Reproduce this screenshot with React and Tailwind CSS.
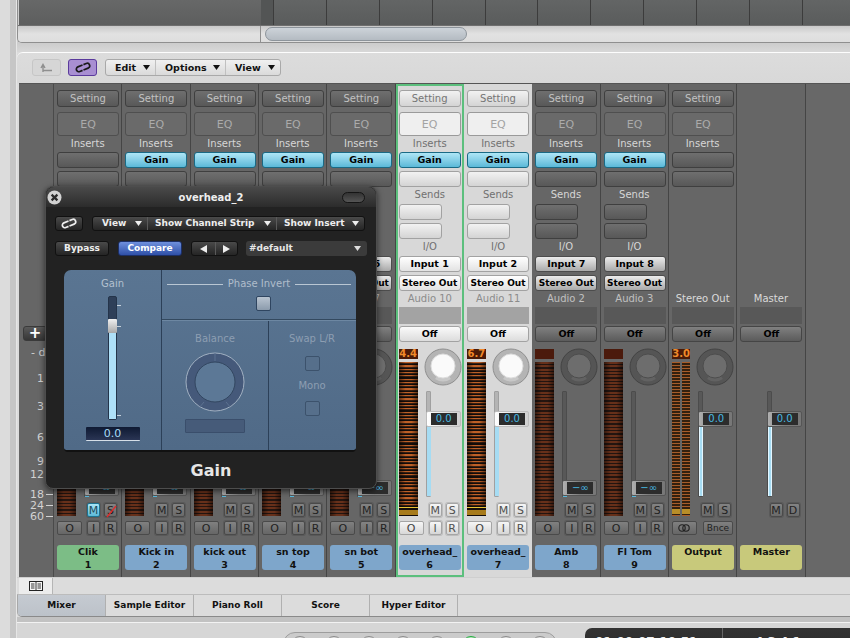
import React from "react";

const stripes = {
  dim: "bg-[linear-gradient(to_right,rgba(0,0,0,.5),transparent_35%,transparent_65%,rgba(0,0,0,.5)),repeating-linear-gradient(to_bottom,#67301a_0,#67301a_2px,#241510_2px,#241510_3.3px)]",
  hot: "bg-[linear-gradient(to_right,rgba(0,0,0,.5),transparent_35%,transparent_65%,rgba(0,0,0,.5)),repeating-linear-gradient(to_bottom,#bd6027_0,#bd6027_1.2px,#3a2012_1.2px,#3a2012_2.2px,#140d0a_2.2px,#140d0a_3.3px)]",
  out: "bg-[repeating-linear-gradient(to_bottom,#a85c2a_0,#a85c2a_1.4px,#33200f_1.4px,#33200f_3px)]",
};

function Chain({ c }) {
  return (
    <svg width="18" height="11" viewBox="0 0 18 11">
      <g transform="rotate(-22 9 5.5)" fill="none" stroke={c} strokeWidth="1.7">
        <path d="M7.5 8 H4.5 A2.5 2.5 0 0 1 4.5 3 H9.5" />
        <path d="M10.5 3 H13.5 A2.5 2.5 0 0 1 13.5 8 H8.5" />
      </g>
    </svg>
  );
}

function Knob({ l }) {
  const ring = l ? "#b4b4b4" : "#555";
  const edge = l ? "#8f8f8f" : "#434343";
  const disc = l ? "#fafafa" : "#6d6d6d";
  const discEdge = l ? "#dcdcdc" : "#4d4d4d";
  return (
    <svg width="38" height="38" viewBox="0 0 38 38" className="block">
      <circle cx="19" cy="19" r="18" fill={ring} stroke={edge} strokeWidth="1" />
      <path d="M11 31 A15 15 0 0 0 27 31 L24 27 A11 11 0 0 1 14 27 Z" fill={l ? "#c8c8c8" : "#626262"} />
      <circle cx="19" cy="18" r="12" fill={disc} stroke={discEdge} strokeWidth="1" />
    </svg>
  );
}

function Mini({ l, children, active, slash }) {
  return (
    <div
      className={
        "relative w-[13px] h-[14px] rounded-[2px] border flex items-center justify-center text-[11px] leading-none shadow-[0_0_0_1px_rgba(0,0,0,.12)] " +
        (active
          ? "bg-gradient-to-b from-[#a8e4f6] to-[#5cb9d8] border-[#1d7391] text-[#1e4a5c]"
          : l
          ? "bg-gradient-to-b from-[#f6f6f6] to-[#d6d6d6] border-[#a5a5a5] text-[#4f4f4f]"
          : "bg-gradient-to-b from-[#838383] to-[#6a6a6a] border-[#4a4a4a] text-[#222]")
      }
    >
      {children}
      {slash && (
        <svg width="13" height="14" viewBox="0 0 13 14" className="absolute left-0 top-0">
          <path d="M2 13 L11 2" stroke="#e02a2a" strokeWidth="1.4" />
        </svg>
      )}
    </div>
  );
}

function Box({ l, className = "", children, kind = "plain" }) {
  const k = {
    plain: l
      ? "bg-gradient-to-b from-[#f2f2f2] to-[#d4d4d4] border-[#a2a2a2] text-[#757575]"
      : "bg-gradient-to-b from-[#6f6f6f] to-[#585858] border-[#3f3f3f] text-[#c2c2c2]",
    eq: l ? "bg-[#efefef] border-[#9a9a9a] text-[#a3a3a3]" : "bg-[#6a6a6a] border-[#4f4f4f] text-[#ababab]",
    gain: "bg-gradient-to-b from-[#aee6f6] to-[#5ab9d8] border-[#1a6a85] text-black font-bold",
    io: l
      ? "bg-gradient-to-b from-[#ffffff] to-[#e2e2e2] border-[#a2a2a2] text-black font-bold"
      : "bg-gradient-to-b from-[#ececec] to-[#a9a9a9] border-[#4c4c4c] text-black font-bold",
    off: l
      ? "bg-gradient-to-b from-[#fafafa] to-[#dcdcdc] border-[#a2a2a2] text-black font-bold"
      : "bg-gradient-to-b from-[#808080] to-[#5b5b5b] border-[#454545] text-black font-bold",
  }[kind];
  return (
    <div className={"border rounded-[3px] flex items-center justify-center leading-none " + k + " " + className}>
      {children}
    </div>
  );
}

function Fader({ l, value, inf, thick }) {
  return (
    <div className="relative w-[35px] h-[106px]">
      <div
        className={
          "absolute left-0 top-0 w-[5px] h-full rounded-[1px] " +
          (l ? "bg-[#b4b4b4] border border-[#a0a0a0]" : "bg-[#585858] border border-[#4c4c4c]")
        }
      />
      {!inf && (
        <div
          className={
            "absolute left-[1px] top-[34px] bottom-[1px] w-[4px] bg-[#a6dcf3] " + (thick ? "border-x border-[#e4f6ff]" : "")
          }
        />
      )}
      {inf && <div className="absolute left-[1px] bottom-0 w-[4px] h-[2px] bg-[#59b9dc]" />}
      <div
        className={
          "absolute left-0 w-[35px] h-[16px] flex items-center rounded-[2px] border " +
          (inf ? "top-[89px] " : "top-[20px] ") +
          (l ? "bg-gradient-to-r from-[#ffffff] to-[#cfcfcf] border-[#bcbcbc]" : "bg-gradient-to-r from-[#b0b0b0] via-[#7d7d7d] to-[#777] border-[#555]")
        }
      >
        <div className="ml-[4px] w-[26px] h-[12px] bg-[#2c2c2c] flex items-center justify-center text-[10px] leading-none text-[#47b9e2]">
          {value}
        </div>
      </div>
    </div>
  );
}

function Strip({ n, sub, audio, input, gain, peak, color = "blue", selected, light, stereo, inf = true, master, active, section = "full" }) {
  const l = !!light;
  const labelCls = "text-[10px] leading-none text-center h-[11px] " + (l ? "text-[#707070]" : "text-[#d6d6d6]");
  const nameCls = {
    blue: "bg-[#7ea6cb]",
    green: "bg-[#7cbd86]",
    yellow: "bg-[#c8c97b]",
  }[color];
  return (
    <div
      className={
        "w-[68.33px] shrink-0 h-full px-[3px] flex flex-col " +
        (l ? "bg-[#d8d8d8] " : "bg-[#666666] border-r border-[#454545] ") +
        (selected ? "shadow-[inset_0_0_0_2px_#5cbf7d] z-[1] " : "")
      }
    >
      <div className="h-[207px] shrink-0 flex flex-col">
        {section !== "none" && (
          <>
            <Box l={l} className="mt-[6px] h-[17px] w-[62px] text-[10px]">Setting</Box>
            <Box l={l} kind="eq" className="mt-[5px] h-[24px] w-[62px] border-[1.5px] text-[11px]">EQ</Box>
            <div className={labelCls + " mt-[3px]"}>Inserts</div>
            <Box l={l} kind={gain ? "gain" : "plain"} className="mt-[2px] h-[16px] w-[62px] text-[9.5px]">{gain ? "Gain" : ""}</Box>
            <Box l={l} className="mt-[3px] h-[16px] w-[62px]" />
          </>
        )}
        {section === "full" && (
          <>
            <div className={labelCls + " mt-[3px]"}>Sends</div>
            <Box l={l} className="mt-[3px] h-[16px] w-[43px]" />
            <Box l={l} className="mt-[3px] h-[16px] w-[43px]" />
            <div className={labelCls + " mt-[3px]"}>I/O</div>
            <Box l={l} kind="io" className="mt-[3px] h-[16px] w-[62px] text-[9.5px]">{input}</Box>
            <Box l={l} kind="io" className="mt-[3px] h-[16px] w-[62px] text-[9px] whitespace-nowrap">Stereo Out</Box>
          </>
        )}
      </div>
      <div
        className={
          "mt-[3px] h-[11px] leading-none text-[10px] text-center " +
          (l ? "text-[#8b8b8b]" : stereo || master ? "text-[#dadada]" : "text-[#c0c0c0]")
        }
      >
        {audio}
      </div>
      <div className={"mt-[2px] h-[17px] w-[62px] " + (l ? "bg-[#a3a3a3]" : "bg-[#585858]")} />
      <Box l={l} kind="off" className="mt-[2px] h-[16px] w-[62px] text-[9.5px]">Off</Box>
      <div className="mt-[7px] flex h-[172px]">
        <div className="w-[19px] flex flex-col">
          {!master && (
            <>
              <div
                className={
                  "h-[10px] text-[10px] leading-none font-bold text-center " +
                  (peak ? "bg-[#4a1a08] text-[#f08a2a]" : "bg-[#4b1a0c]")
                }
              >
                {peak}
              </div>
              {stereo ? (
                <div className="mt-[3px] h-[154px] flex gap-[2px]">
                  <div className={"w-[8px] h-full flex flex-col justify-end " + stripes.out}>
                    <div className="h-[5px] mb-[2px] bg-[#b98e28]" />
                  </div>
                  <div className={"w-[8px] h-full flex flex-col justify-end " + stripes.out}>
                    <div className="h-[5px] mb-[2px] bg-[#b98e28]" />
                  </div>
                </div>
              ) : (
                <div className={"mt-[3px] h-[154px] w-[19px] flex flex-col justify-end " + (peak ? stripes.hot : stripes.dim)}>
                  {peak && (
                    <>
                      <div className="h-[1px] bg-[#e6c335]" />
                      <div className="h-[2px] bg-[#140d0a]" />
                      <div className="h-[5px] bg-[#a77b1c]" />
                      <div className="h-[1px] bg-[#140d0a]" />
                    </>
                  )}
                </div>
              )}
            </>
          )}
        </div>
        <div className="ml-[8px] w-[35px] flex flex-col">
          <div className="h-[38px] -ml-[2px] -mt-[1px]">{!master && <Knob l={l} />}</div>
          <div className="mt-[5px]">
            <Fader l={l} value={inf ? "−∞" : "0.0"} inf={inf} thick={stereo || master} />
          </div>
          <div className="mt-[6px] ml-[3px] flex gap-[4px]">
            <Mini l={l} active={active}>M</Mini>
            <Mini l={l} slash={active}>{master ? "D" : "S"}</Mini>
          </div>
        </div>
      </div>
      <div className="h-[14px] flex">
        {!master && (
          <>
            <div className={"w-[25px] h-[14px] rounded-[2px] border flex items-center justify-center text-[11px] leading-none " + (l ? "bg-gradient-to-b from-[#f6f6f6] to-[#d8d8d8] border-[#a5a5a5] text-[#444]" : "bg-gradient-to-b from-[#808080] to-[#666] border-[#4a4a4a] text-[#222]")}>
              {stereo ? (
                <svg width="14" height="8" viewBox="0 0 14 8">
                  <circle cx="5" cy="4" r="3.2" fill="none" stroke="#1f1f1f" strokeWidth="1.1" />
                  <circle cx="9" cy="4" r="3.2" fill="none" stroke="#1f1f1f" strokeWidth="1.1" />
                </svg>
              ) : (
                "O"
              )}
            </div>
            {stereo ? (
              <div className="ml-[6px] w-[30px] h-[14px] rounded-[2px] border bg-gradient-to-b from-[#808080] to-[#666] border-[#4a4a4a] text-[#222] flex items-center justify-center text-[9px] leading-none">
                Bnce
              </div>
            ) : (
              <div className="ml-[5px] flex gap-[4px]">
                <Mini l={l}>I</Mini>
                <Mini l={l}>R</Mini>
              </div>
            )}
          </>
        )}
      </div>
      <div className={"mt-[10px] h-[25px] w-[62px] rounded-[3px] text-[9.5px] leading-[13px] font-bold text-center text-[#111] " + nameCls}>
        <div className="whitespace-nowrap overflow-hidden">{n}</div>
        <div>{sub}</div>
      </div>
    </div>
  );
}

function Toolbar() {
  return (
    <div className="h-[31px] shrink-0 rounded-tl-[6px] border-t border-[#fdfdfd] bg-gradient-to-b from-[#dcdcdc] to-[#d8d8d8] flex items-start pt-[6px] pl-[15px]">
      <div className="w-[29px] h-[17px] rounded-[3px] border border-[#c6c6c6] bg-[#d6d6d6] flex items-center justify-center">
        <svg width="13" height="10" viewBox="0 0 13 10">
          <path d="M3 9 V3 M1 5 L3 1.5 L5 5 M3 7.5 H12" stroke="#8f8f8f" strokeWidth="1.4" fill="none" />
        </svg>
      </div>
      <div className="ml-[7px] w-[29px] h-[17px] rounded-[3px] border border-[#5a3a9c] bg-[#a88fd2] flex items-center justify-center">
        <Chain c="#1a1a1a" />
      </div>
      <div className="ml-[8px] w-[176px] h-[17px] rounded-[3px] border border-[#a9a9a9] bg-gradient-to-b from-[#f0f0f0] to-[#dadada] flex text-[9.5px] font-bold text-[#111] leading-none">
        <Menu w="w-[50px]" label="Edit" />
        <Menu w="w-[70px]" label="Options" />
        <Menu w="flex-1" label="View" none />
      </div>
    </div>
  );
}

function Menu({ w, label, none }) {
  return (
    <div className={w + " h-full flex items-center justify-between pl-[9px] pr-[5px] " + (none ? "" : "border-r border-[#c0c0c0]")}>
      <span>{label}</span>
      <Tri />
    </div>
  );
}

function Tri({ c = "#111" }) {
  return (
    <svg width="7" height="5" viewBox="0 0 7 5" className="shrink-0">
      <path d="M0 0 H7 L3.5 5 Z" fill={c} />
    </svg>
  );
}

function PBtn({ className = "", children }) {
  return (
    <div className={"h-[15px] rounded-[3px] border border-[#111] bg-gradient-to-b from-[#4a4a4a] to-[#252525] text-[#eeeeee] text-[9px] font-bold leading-none flex items-center " + className}>
      {children}
    </div>
  );
}

function Check({ bright, className = "" }) {
  return (
    <div
      className={
        "w-[15px] h-[15px] rounded-[2px] border " +
        (bright ? "bg-gradient-to-b from-[#b9c4d0] to-[#8b9bac] border-[#2f4560] " : "bg-[#566f8b] border-[#3c526c] ") +
        className
      }
    />
  );
}

function Plugin() {
  return (
    <div className="absolute left-[45px] top-[186px] w-[332px] h-[303px] rounded-[8px] bg-[#222222] border border-[#4d4d4d] flex flex-col z-10 shadow-[0_2px_6px_rgba(0,0,0,.6)]">
      <div className="relative h-[20px] shrink-0 rounded-t-[8px] bg-gradient-to-b from-[#4a4a4a] to-[#2c2c2c] flex items-center justify-center pt-[1px] text-[#eee] text-[10px] font-bold leading-none">
        overhead_2
        <svg width="15" height="15" viewBox="0 0 15 15" className="absolute left-[1px] top-[3px]">
          <circle cx="7.5" cy="7.5" r="7" fill="#d2d2d2" />
          <path d="M4.6 4.6 L10.4 10.4 M10.4 4.6 L4.6 10.4" stroke="#2b2b2b" strokeWidth="2.2" />
        </svg>
        <div className="absolute right-[11px] top-[5px] w-[23px] h-[11px] rounded-full border border-[#151515] bg-gradient-to-b from-[#333] to-[#555]" />
      </div>

      <div className="mt-[9px] flex ml-[9px]">
        <PBtn className="w-[28px] justify-center">
          <Chain c="#eee" />
        </PBtn>
        <PBtn className="ml-[9px] w-[273px]">
          <div className="w-[55px] h-full flex items-center justify-between pl-[9px] pr-[5px] border-r border-[#5a5a5a]">
            <span>View</span><Tri c="#eee" />
          </div>
          <div className="w-[129px] h-full flex items-center justify-between pl-[7px] pr-[5px] border-r border-[#5a5a5a] whitespace-nowrap">
            <span>Show Channel Strip</span><Tri c="#eee" />
          </div>
          <div className="flex-1 h-full flex items-center justify-between pl-[7px] pr-[5px] whitespace-nowrap">
            <span>Show Insert</span><Tri c="#eee" />
          </div>
        </PBtn>
      </div>

      <div className="mt-[10px] flex ml-[9px]">
        <PBtn className="w-[54px] justify-center">Bypass</PBtn>
        <div className="ml-[9px] w-[64px] h-[15px] rounded-[3px] border border-[#1c2f66] bg-gradient-to-b from-[#6f90dd] to-[#2f50a8] text-white text-[9px] font-bold leading-none flex items-center justify-center">
          Compare
        </div>
        <PBtn className="ml-[9px] w-[47px]">
          <div className="w-[24px] h-full flex items-center justify-center border-r border-[#5a5a5a]">
            <svg width="7" height="8" viewBox="0 0 7 8"><path d="M7 0 V8 L0 4 Z" fill="#eee" /></svg>
          </div>
          <div className="flex-1 h-full flex items-center justify-center">
            <svg width="7" height="8" viewBox="0 0 7 8"><path d="M0 0 V8 L7 4 Z" fill="#eee" /></svg>
          </div>
        </PBtn>
        <div className="ml-[8px] w-[121px] h-[15px] rounded-[3px] bg-[#3b3b3b] text-[#e6e6e6] text-[9px] font-bold leading-none flex items-center justify-between pl-[3px] pr-[6px]">
          <span>#default</span><Tri c="#ddd" />
        </div>
      </div>

      <div className="mt-[14px] ml-[18px] w-[292px] h-[182px] rounded-t-[7px] rounded-b-[4px] bg-gradient-to-b from-[#5a7592] to-[#506a87] border-b-2 border-[#111] flex text-[#a9b7c7] text-[10px] leading-none overflow-hidden">
        <div className="w-[98px] flex flex-col items-center pt-[9px] border-r border-[#2c4058]">
          <div className="h-[10px] text-[#b4c1cf]">Gain</div>
          <div className="relative mt-[7px] w-[9px] h-[124px] rounded-[2px] bg-[#2e3f58] border border-[#24344a]">
            <div className="absolute left-0 right-0 top-[36px] bottom-0 bg-[#aee0f8]" />
            <div className="absolute left-[-1px] w-[9px] top-[22px] h-[14px] rounded-[1px] bg-gradient-to-b from-[#f0f0f0] to-[#a9a9a9]" />
            <div className="absolute left-[8px] top-[8px] w-[4px] h-px bg-[#c8d2dc]" />
            <div className="absolute left-[8px] top-[29px] w-[4px] h-px bg-[#c8d2dc]" />
            <div className="absolute left-[8px] top-[118px] w-[4px] h-px bg-[#c8d2dc]" />
          </div>
          <div className="mt-[7px] w-[54px] h-[14px] rounded-[1px] bg-gradient-to-b from-[#0f1a33] to-[#2a3554] border-b border-[#d6dfe8] text-[#a8dcf6] text-[11px] flex items-center justify-center">
            0.0
          </div>
        </div>
        <div className="flex-1 flex flex-col">
          <div className="h-[50px] shrink-0 flex flex-col items-center pt-[9px] border-b border-[#33495f]">
            <div className="w-full flex items-center px-[5px] h-[10px]">
              <div className="flex-1 h-px bg-[#b9c6d3]" />
              <span className="px-[5px] whitespace-nowrap text-[#b0bdcb]">Phase Invert</span>
              <div className="flex-1 h-px bg-[#b9c6d3]" />
            </div>
            <Check bright className="mt-[7px] ml-[8px]" />
          </div>
          <div className="flex-1 flex border-t border-[#6d87a2]">
            <div className="w-[107px] border-r border-[#2c4058] flex flex-col items-center pt-[13px]">
              <div className="h-[10px] text-[#8d9eb2]">Balance</div>
              <svg width="60" height="60" viewBox="0 0 60 60" className="mt-[8px] block">
                <circle cx="30" cy="30" r="29" fill="#45597a" stroke="#a1b0c1" strokeWidth="1" />
                <path d="M30 1 V9 M19 50 L14 56 M41 50 L46 56" stroke="#5c7290" strokeWidth="1" />
                <circle cx="30" cy="30" r="20" fill="#5c7896" stroke="#324660" strokeWidth="1" />
              </svg>
              <div className="mt-[7px] w-[60px] h-[14px] rounded-[1px] bg-[#465b79] border border-[#3a4e6b]" />
            </div>
            <div className="flex-1 flex flex-col items-center pt-[13px] pr-[1px]">
              <div className="h-[10px] text-[#8d9eb2]">Swap L/R</div>
              <Check className="mt-[12px]" />
              <div className="mt-[10px] h-[10px] text-[#8d9eb2]">Mono</div>
              <Check className="mt-[10px]" />
            </div>
          </div>
        </div>
      </div>

      <div className="flex-1 flex items-center justify-center pt-[2px] text-[#e6e6e6] text-[16px] font-bold leading-none">Gain</div>
    </div>
  );
}

const scale = [
  ["- dB", "mt-[5px] mr-[-9px]", false],
  ["1", "mt-[14px]", false],
  ["3", "mt-[16px]", false],
  ["6", "mt-[19px]", false],
  ["9", "mt-[12px]", false],
  ["12", "mt-[1px]", false],
  ["18", "mt-[8px]", true],
  ["24", "mt-[-1px]", true],
  ["60", "mt-[-1px]", true],
];

export default function App() {
  const dark = [
    { n: "Clik", sub: "1", color: "green", audio: "Audio 4", input: "Input 1", active: true },
    { n: "Kick in", sub: "2", gain: true, audio: "Audio 5", input: "Input 1" },
    { n: "kick out", sub: "3", gain: true, audio: "Audio 6", input: "Input 2" },
    { n: "sn top", sub: "4", gain: true, audio: "Audio 8", input: "Input 3" },
    { n: "sn bot", sub: "5", gain: true, audio: "Audio 7", input: "Input 5" },
  ];
  return (
    <div className="relative w-[850px] h-[638px] overflow-hidden bg-[#cdcdcd] flex font-['DejaVu_Sans',sans-serif]">
      <div className="w-[10px] shrink-0 bg-[#dcdcdc]" />
      <div className="w-[7px] shrink-0 bg-[#c6c6c6] border-r border-[#e6e6e6]" />
      <div className="flex-1 min-w-0 flex flex-col">
        <div className="h-[43px] shrink-0 rounded-bl-[5px] border-b border-[#8f8f8f] border-l overflow-hidden flex flex-col">
          <div className="h-[26px] shrink-0 flex border-b border-[#6e6e6e]">
            <div className="w-[242px] ml-[1px] bg-gradient-to-b from-[#676868] to-[#5d5e5e]" />
            <div className="flex-1 flex bg-gradient-to-b from-[#636565] to-[#5a5c5c]">
              <div className="w-[13px] bg-[#535555] border-r border-[#3c3c3c]" />
              {[0, 1, 2, 3, 4, 5, 6, 7, 8, 9].map((i) => (
                <div key={i} className="w-[52.9px] shrink-0 border-r border-[#3c3c3c]" />
              ))}
            </div>
          </div>
          <div className="flex-1 flex bg-gradient-to-b from-[#c9c9c9] via-[#e2e2e2] to-[#dedede]">
            <div className="w-[243px] border-r border-[#8f8f8f]" />
            <div className="flex-1 flex items-center pl-[4px]">
              <div className="w-[202px] h-[14px] rounded-full border border-[#8d949b] bg-gradient-to-b from-[#cdd3d9] to-[#b4bbc2]" />
            </div>
          </div>
        </div>
        <div className="h-[9px] shrink-0 bg-gradient-to-b from-[#cccccc] to-[#d8d8d8]" />
        <div className="h-[565px] shrink-0 flex flex-col bg-[#dcdcdc]">
          <Toolbar />
          <div className="h-[494px] shrink-0 ml-[2px] flex overflow-hidden border-t border-[#555]">
            <div className="w-[35px] shrink-0 bg-[#666] border-r border-[#4a4a4a] flex flex-col">
              <div className="mt-[242px] ml-[4px] w-[24px] h-[15px] rounded-[3px] border border-[#3a3a3a] bg-gradient-to-b from-[#5a5a5a] to-[#363636] text-white text-[15px] font-bold leading-none flex items-center justify-center pb-[1px]">
                +
              </div>
              {scale.map(([t, m, tick]) => (
                <div key={t} className={"h-[12px] flex items-center justify-end text-[11px] leading-none text-[#d2d2d2] whitespace-nowrap " + m}>
                  <span>{t}</span>
                  <span className={"ml-[2px] w-[7px] h-px " + (tick ? "bg-[#d2d2d2]" : "")} />
                </div>
              ))}
            </div>
            {dark.map((s) => (
              <Strip key={s.sub} {...s} />
            ))}
            <Strip n="overhead_" sub="6" gain light selected peak="4.4" audio="Audio 10" input="Input 1" inf={false} />
            <Strip n="overhead_" sub="7" gain light peak="6.7" audio="Audio 11" input="Input 2" inf={false} />
            <Strip n="Amb" sub="8" gain audio="Audio 2" input="Input 7" />
            <Strip n="Fl Tom" sub="9" gain audio="Audio 3" input="Input 8" />
            <Strip n="Output" sub="" color="yellow" section="top" audio="Stereo Out" peak="3.0" stereo inf={false} />
            <Strip n="Master" sub="" color="yellow" section="none" audio="Master" master inf={false} />
            <div className="flex-1 bg-[#686868]" />
          </div>
          <div className="h-[17px] shrink-0 flex border-t border-[#cfcfcf]">
            <div className="ml-[2px] w-[34px] bg-[#ececec] border-r border-[#b5b5b5] flex items-center justify-center">
              <svg width="14" height="10" viewBox="0 0 14 10">
                <rect x=".5" y=".5" width="13" height="9" fill="#f6f6f6" stroke="#222" />
                <path d="M7 1 V9 M2 3 H5.5 M2 5 H5.5 M2 7 H5.5 M8.5 3 H12 M8.5 5 H12 M8.5 7 H12" stroke="#222" strokeWidth=".9" />
              </svg>
            </div>
          </div>
          <div className="h-[23px] shrink-0 rounded-bl-[5px] border-y border-t-[#bcbcbc] border-b-[#8a8a8a] border-l border-l-[#a8a8a8] flex text-[9px] font-bold leading-none text-[#111] bg-[#dcdcdc] overflow-hidden">
            {["Mixer", "Sample Editor", "Piano Roll", "Score", "Hyper Editor"].map((t, i) => (
              <div
                key={t}
                className={
                  "w-[88px] flex items-center justify-center border-r border-[#b0b0b0] whitespace-nowrap " +
                  (i === 0 ? "bg-gradient-to-b from-[#c5cad1] to-[#bcc2c9]" : "")
                }
              >
                {t}
              </div>
            ))}
          </div>
        </div>
        <div className="h-[6px] shrink-0 bg-[#c2c2c2] border-b border-[#f2f2f2]" />
        <div className="flex-1 relative flex items-start bg-[#d6d6d6] pl-[266px]">
          <div className="mt-[9px] w-[274px] h-[30px] rounded-t-[12px] border border-[#9d9d9d] bg-[#cbcbcb] flex justify-between px-[7px] pt-[3px]">
            {[0, 1, 2, 3, 4, 5, 6, 7].map((i) => (
              <div key={i} className={"w-[18px] h-[18px] rounded-full border-[1.5px] " + (i === 5 ? "border-[#1fae3c] bg-[#bfe2c3]" : "border-[#8a8a8a] bg-[#dedede]")} />
            ))}
          </div>
          <div className="ml-[28px] mt-[5px] flex-1 h-[30px] rounded-tl-[7px] bg-gradient-to-b from-[#333] to-[#2a2a2a] flex items-start text-[#eee] text-[12px] font-bold leading-none">
            <div className="w-[138px] h-full pt-[8px] pl-[10px] border-r border-[#666] whitespace-nowrap">01:00:07:10.51</div>
            <div className="flex-1 pt-[8px] pl-[32px] whitespace-nowrap">4 3 4 1</div>
          </div>
        </div>
      </div>
      <Plugin />
    </div>
  );
}
